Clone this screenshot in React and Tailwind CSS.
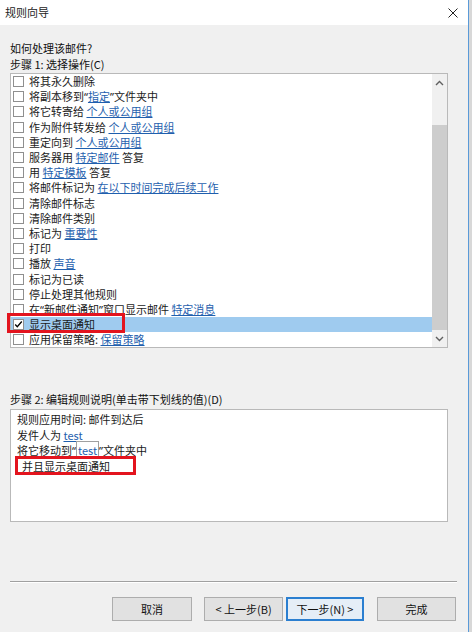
import React from "react";

const font = { fontFamily: '"Noto Sans CJK SC", "Noto Sans", sans-serif' };

const L = ({ children }) => (
  <span className="text-[#1f5fae] underline decoration-[#1f5fae] underline-offset-[1px]">{children}</span>
);

const Q = ({ children }) => (
  <span style={{ fontFamily: '"Noto Sans", "Liberation Sans", sans-serif' }}>{children}</span>
);

const rows = [
  [<>将其永久删除</>],
  [<>将副本移到<Q>“</Q><L>指定</L><Q>”</Q>文件夹中</>],
  [<>将它转寄给 <L>个人或公用组</L></>],
  [<>作为附件转发给 <L>个人或公用组</L></>],
  [<>重定向到 <L>个人或公用组</L></>],
  [<>服务器用 <L>特定邮件</L> 答复</>],
  [<>用 <L>特定模板</L> 答复</>],
  [<>将邮件标记为 <L>在以下时间完成后续工作</L></>],
  [<>清除邮件标志</>],
  [<>清除邮件类别</>],
  [<>标记为 <L>重要性</L></>],
  [<>打印</>],
  [<>播放 <L>声音</L></>],
  [<>标记为已读</>],
  [<>停止处理其他规则</>],
  [<>在<Q>“</Q>新邮件通知<Q>”</Q>窗口显示邮件 <L>特定消息</L></>],
  [<>显示桌面通知</>, true],
  [<>应用保留策略: <L>保留策略</L></>],
];

function Check({ checked }) {
  return (
    <div className="w-[11px] h-[11px] border border-[#8f8f8f] bg-white shrink-0 flex items-center justify-center">
      {checked && (
        <svg width="11" height="11" viewBox="0 0 11 11">
          <path d="M1.5 5.5 L4 8.3 L9.5 1.8" fill="none" stroke="#000" strokeWidth="1.6" />
        </svg>
      )}
    </div>
  );
}

function Btn({ children, def, className }) {
  return (
    <div
      className={
        "h-[24px] flex items-center justify-center text-[11px] text-[#111] " +
        (def ? "border-2 border-[#2b7fd0] bg-[#e5eef7] " : "border border-[#adadad] bg-[#e1e1e1] ") +
        className
      }
    >
      {children}
    </div>
  );
}

export default function App() {
  return (
    <div className="w-[472px] h-[632px] flex overflow-hidden" style={font}>
      <div className="w-[468px] h-full flex flex-col relative">
        {/* title bar */}
        <div className="h-[25px] bg-white flex items-center justify-between pl-[5px] pr-[10px] shrink-0">
          <span className="text-[11px] text-[#222] leading-none">规则向导</span>
          <svg width="10" height="10" viewBox="0 0 10 10">
            <path d="M0.5 0.5 L9.5 9.5 M9.5 0.5 L0.5 9.5" stroke="#222" strokeWidth="1" />
          </svg>
        </div>
        {/* body */}
        <div className="flex-1 bg-[#f0f0f0] pl-[10px] pt-[15px] flex flex-col">
          <div className="h-[16px] leading-[16px] text-[11px] text-[#111]">如何处理该邮件?</div>
          <div className="h-[16px] leading-[16px] text-[11px] text-[#111]">步骤 1: 选择操作(C)</div>
          <div className="mt-[1px] w-[438px] h-[275px] border border-[#b9b9b9] bg-white flex overflow-hidden">
            <div className="flex-1 flex flex-col">
              {rows.map(([content, checked], i) => (
                <div
                  key={i}
                  className={
                    "h-[15.2px] shrink-0 flex items-center gap-[5px] pl-[2px] text-[11px] text-[#1a1a1a] whitespace-nowrap " +
                    (checked ? "bg-[#9fcbef]" : "")
                  }
                >
                  <Check checked={checked} />
                  <span className="leading-[15px]">{content}</span>
                </div>
              ))}
            </div>
            {/* scrollbar */}
            <div className="w-[15px] bg-[#f0f0f0] flex flex-col shrink-0">
              <div className="h-[17px] flex items-center justify-center">
                <svg width="9" height="6" viewBox="0 0 9 6">
                  <path d="M1 5 L4.5 1.5 L8 5" fill="none" stroke="#606060" strokeWidth="1.4" />
                </svg>
              </div>
              <div className="h-[34px]" />
              <div className="flex-1 bg-[#cdcdcd]" />
              <div className="h-[17px] flex items-center justify-center">
                <svg width="9" height="6" viewBox="0 0 9 6">
                  <path d="M1 1 L4.5 4.5 L8 1" fill="none" stroke="#606060" strokeWidth="1.4" />
                </svg>
              </div>
            </div>
          </div>
          <div className="mt-[43px] h-[16px] leading-[16px] text-[11px] text-[#111]">
            步骤 2: 编辑规则说明(单击带下划线的值)(D)
          </div>
          <div className="mt-[2px] w-[438px] h-[113px] border border-[#b9b9b9] bg-white pt-[2px] pl-[6px] text-[11px] text-[#1a1a1a] leading-[15.5px]">
            <div>规则应用时间: 邮件到达后</div>
            <div>发件人为 <L>test</L></div>
            <div>
              将它移动到<Q>“</Q><span className="border border-[#a0a0a0] px-[1px]"><L>test</L></span><Q>”</Q>文件夹中
            </div>
            <div className="pl-[5px]">并且显示桌面通知</div>
          </div>
          <div className="mt-[59px] w-[447px] h-[1px] bg-[#a0a0a0]" />
          <div className="w-[447px] h-[1px] bg-white" />
          <div className="mt-[14px] flex w-[447px]">
            <Btn className="ml-[102px] w-[80px]">取消</Btn>
            <Btn className="ml-[12px] w-[79px]">&lt; 上一步(B)</Btn>
            <Btn def className="ml-[3px] w-[78px]">下一步(N) &gt;</Btn>
            <Btn className="ml-[13px] w-[79px]">完成</Btn>
          </div>
        </div>
        {/* annotation red boxes */}
        <div className="absolute left-[7px] top-[313px] w-[118px] h-[20px] border-[3px] border-[#e3141e]" />
        <div className="absolute left-[15px] top-[456px] w-[121px] h-[19px] border-[3px] border-[#e3141e]" />
      </div>
      <div className="w-[1px] h-full bg-[#5a9ad8]" />
      <div className="w-[3px] h-full bg-[#d8d8d8]" />
    </div>
  );
}
